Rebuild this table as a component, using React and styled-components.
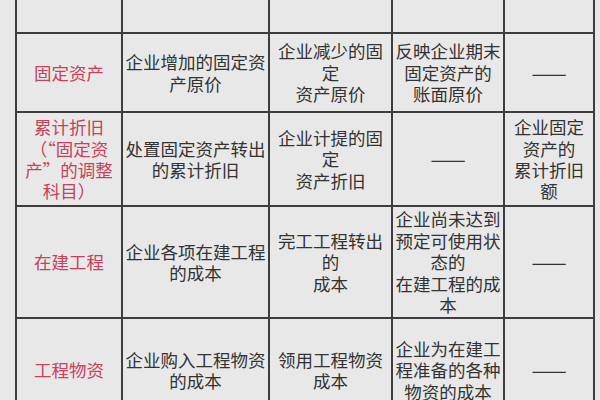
import React from "react";
import styled, { createGlobalStyle } from "styled-components";

const Global = createGlobalStyle`
  html, body { margin: 0; padding: 0; background: #e8e8e8; }
  body { width: 600px; height: 400px; overflow: hidden; }
`;

const Page = styled.div`
  width: 600px;
  height: 400px;
  overflow: hidden;
  background: #e8e8e8;
  padding-left: 15px;
  box-sizing: border-box;
`;

const Grid = styled.div`
  display: grid;
  width: 580px;
  box-sizing: border-box;
  padding: 0 2px;
  grid-template-columns: 104px 145px 121px 110px 88px;
  grid-template-rows: 32px 77px 92px 110px 102px;
  gap: 2px;
  background: #3d3d3d;
  font-family: "Noto Sans CJK SC", "Noto Sans", sans-serif;
`;

const Cell = styled.div`
  background: #e8e8e8;
  display: flex;
  align-items: center;
  justify-content: center;
  text-align: center;
  font-size: 17.5px;
  line-height: 21.4px;
  white-space: nowrap;
  color: ${(p) => (p.$accent ? "#c8405a" : "#333333")};
`;

const Dash = styled.span`
  font-size: 21px;
  color: #333333;
  letter-spacing: 0;
`;

const rows = [
  {
    head: ["固定资产"],
    cells: [
      ["企业增加的固定资", "产原价"],
      ["企业减少的固", "定", "资产原价"],
      ["反映企业期末", "固定资产的", "账面原价"],
      null,
    ],
  },
  {
    head: ["累计折旧", "（“固定资", "产”的调整", "科目）"],
    cells: [
      ["处置固定资产转出", "的累计折旧"],
      ["企业计提的固", "定", "资产折旧"],
      null,
      ["企业固定", "资产的", "累计折旧", "额"],
    ],
  },
  {
    head: ["在建工程"],
    cells: [
      ["企业各项在建工程", "的成本"],
      ["完工工程转出", "的", "成本"],
      ["企业尚未达到", "预定可使用状", "态的", "在建工程的成", "本"],
      null,
    ],
  },
  {
    head: ["工程物资"],
    cells: [
      ["企业购入工程物资", "的成本"],
      ["领用工程物资", "成本"],
      ["企业为在建工", "程准备的各种", "物资的成本"],
      null,
    ],
  },
];

const Lines = ({ lines }) =>
  lines.map((l, i) => (
    <React.Fragment key={i}>
      {i > 0 && <br />}
      {l}
    </React.Fragment>
  ));

export default function App() {
  return (
    <>
      <Global />
      <Page>
        <Grid>
          {[0, 1, 2, 3, 4].map((i) => (
            <Cell key={"h" + i} />
          ))}
          {rows.map((r, ri) => (
            <React.Fragment key={ri}>
              <Cell $accent>
                <div>
                  <Lines lines={r.head} />
                </div>
              </Cell>
              {r.cells.map((c, ci) => (
                <Cell key={ci}>
                  {c ? (
                    <div>
                      <Lines lines={c} />
                    </div>
                  ) : (
                    <Dash>——</Dash>
                  )}
                </Cell>
              ))}
            </React.Fragment>
          ))}
        </Grid>
      </Page>
    </>
  );
}
